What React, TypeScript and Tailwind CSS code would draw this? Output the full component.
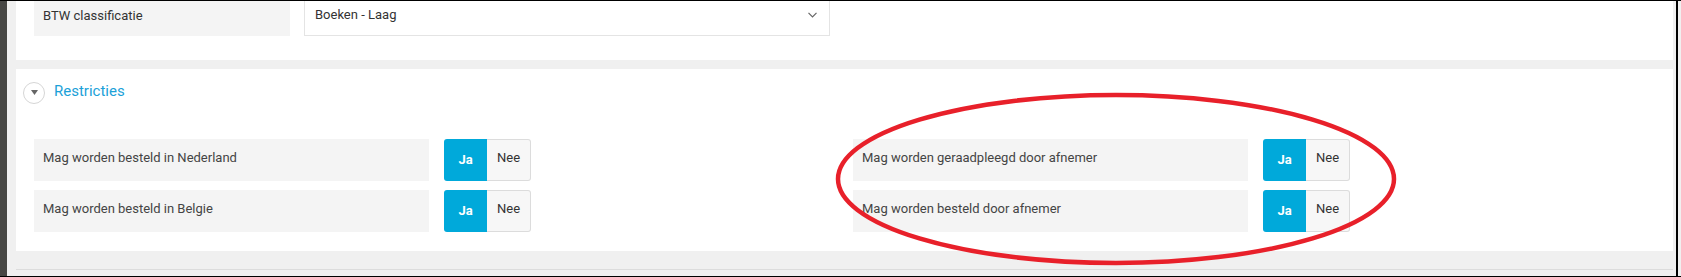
const restrictions = [
  ["Mag worden besteld in Nederland", "Mag worden geraadpleegd door afnemer"],
  ["Mag worden besteld in Belgie", "Mag worden besteld door afnemer"],
];

function Toggle() {
  return (
    <div className="ml-[15px] flex h-[42px]">
      <button
        type="button"
        className="w-[43px] rounded-l-[3px] bg-[#00a9da] text-[13px] font-bold text-white"
      >
        Ja
      </button>
      <button
        type="button"
        className="w-[44px] rounded-r-[3px] border border-l-0 border-[#dcdcdc] bg-[#f7f7f7] pb-[4px] text-[13px] text-[#333]"
      >
        Nee
      </button>
    </div>
  );
}

function RestrictionRow({ label }: { label: string }) {
  return (
    <div className="flex">
      <div className="flex h-[42px] w-[395px] items-center bg-[#f4f4f4] pb-[3px] pl-[9px] text-[13px] text-[#444]">
        {label}
      </div>
      <Toggle />
    </div>
  );
}

export default function App() {
  return (
    <div
      className="relative flex h-[277px] w-[1681px] overflow-hidden border-y border-black bg-[#f0f0f0]"
      style={{ fontFamily: "Roboto, 'Liberation Sans', sans-serif" }}
    >
      <div className="w-[7px] shrink-0 bg-[#474744]" />
      <div className="flex w-[1669px] flex-col pl-[9px] pr-[3px]">
        {/* BTW block (continues above the crop) */}
        <div className="flex h-[59px] bg-white pl-[18px]">
          <div className="flex h-[35px] w-[256px] items-center bg-[#f4f4f4] pb-[6px] pl-[9px] text-[13px] text-[#333]">
            BTW classificatie
          </div>
          <div className="ml-[14px] flex h-[35px] w-[526px] items-center justify-between border-x border-b border-[#e4e4e4] pb-[6px] pl-[10px] pr-[12px] text-[13px] text-[#333]">
            <span>Boeken - Laag</span>
            <svg width="9" height="6" viewBox="0 0 9 6">
              <path d="M0.5 0.8 L4.5 4.8 L8.5 0.8" fill="none" stroke="#666" strokeWidth="1.2" />
            </svg>
          </div>
        </div>

        {/* Restricties */}
        <div className="mt-[9px] h-[182px] bg-white pt-[11px]">
          <div className="flex items-center pl-[7px]">
            <span className="flex h-[22px] w-[22px] items-center justify-center rounded-full border border-[#d6d6d6] bg-white">
              <svg width="7" height="5" viewBox="0 0 7 5">
                <path d="M0 0 L7 0 L3.5 5 Z" fill="#666" />
              </svg>
            </span>
            <span className="ml-[9px] pb-[3px] text-[15px] text-[#1ba1d8]">Restricties</span>
          </div>
          <div className="mt-[33px] flex pl-[18px]">
            {[0, 1].map((col) => (
              <div key={col} className="flex w-[819px] flex-col gap-[9px]">
                {restrictions.map((row) => (
                  <RestrictionRow key={row[col]} label={row[col]} />
                ))}
              </div>
            ))}
          </div>
        </div>

        <div className="mt-[18px] h-px bg-[#dcdcdc]" />
      </div>
      <div className="w-[2px] shrink-0 bg-black" />

      {/* hand-drawn annotation */}
      <svg className="pointer-events-none absolute left-0 top-[-1px]" width="1681" height="277">
        <ellipse cx="1116" cy="179" rx="278" ry="84" fill="none" stroke="#e8202a" strokeWidth="4.5" />
      </svg>
    </div>
  );
}
